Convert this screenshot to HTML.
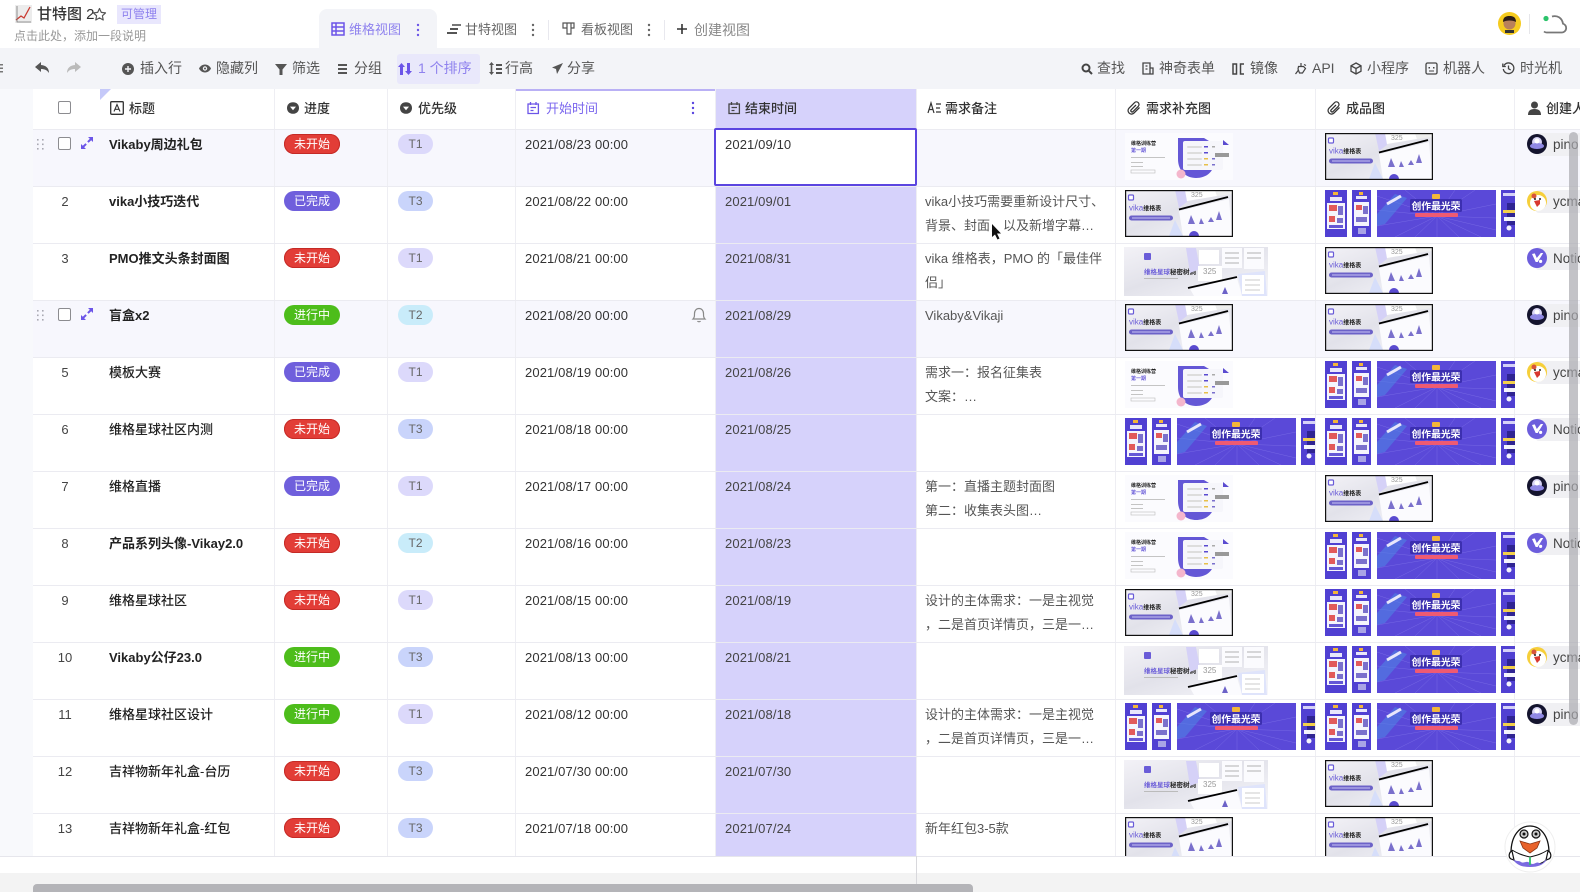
<!DOCTYPE html>
<html lang="zh-CN">
<head>
<meta charset="utf-8">
<title>甘特图 2</title>
<style>
html,body{margin:0;padding:0;width:1580px;height:892px;overflow:hidden;background:#fff}
body{position:relative;font:13px/20px "Liberation Sans","Noto Sans CJK SC",sans-serif;color:#444}
.t,.ic{position:absolute;white-space:nowrap}
.bar{font-size:14px;color:#555;line-height:20px;top:58px}
.ic{display:block;overflow:visible}
.tab{font-size:13px;color:#666;top:20px}
.hd{top:99px;color:#333;font-size:13px;font-weight:500}
.r{position:absolute;left:0;width:1580px;height:57px;overflow:hidden;z-index:3;border-top:1px solid #ebebf1;box-sizing:border-box}
.r .t{top:5px;line-height:20px}
.n{left:33px;width:64px;text-align:center;color:#444}
.ti{left:109px;font-weight:700;color:#222}
.r .p{left:284px;top:4px;width:56px;height:20px;border-radius:10px;color:#fff;font-size:12px;text-align:center}
.p0{background:#e23d37;box-shadow:inset 0 0 0 1px #c42a26}.p1{background:#6f5fdc}.p2{background:#4dbd1b}
.r .q{left:398px;top:4px;width:35px;height:20px;border-radius:10px;font-size:12px;text-align:center;color:#666}
.t1{background:#dcd9fb}.t2{background:#c9ecfa}.t3{background:#c9d4fb}
.d{left:525px;color:#333;letter-spacing:.12px}.e{left:725px;color:#444;letter-spacing:.12px}
.r .m{left:925px;top:3px;line-height:24px;color:#555}
.th{position:absolute;top:3px}
.chip{position:absolute;left:1535px;top:3px;width:60px;height:23px;background:#f0f0f3;border-radius:4px}
.r .u{left:1553px;top:5px;color:#444;font-size:13.5px}
.av{position:absolute;left:1527px;top:4px}
.cb{position:absolute;left:58px;top:7px;width:11px;height:11px;border:1.5px solid #8c8c90;border-radius:2px;box-sizing:content-box;background:#fff}
.v{position:absolute;top:89px;height:768px;width:1px;background:#eeeef3;z-index:2}
</style>
</head>
<body>
<svg width="0" height="0" style="position:absolute">
<defs>
<linearGradient id="ga" x1="0" y1="0" x2="1" y2="1"><stop offset="0" stop-color="#f3f2f7"/><stop offset=".45" stop-color="#e2e2ea"/><stop offset="1" stop-color="#f7f7fb"/></linearGradient>
<symbol id="A" viewBox="0 0 108 47">
<rect width="108" height="47" fill="url(#ga)"/>
<polygon points="50,0 60,0 62,12 54,18" fill="#d5d1f7"/>
<polygon points="60,0 90,0 92,6 62,11" fill="#fff"/>
<polygon points="90,0 108,0 108,4 92,6" fill="#eee"/>
<text x="66" y="7" font-size="7" fill="#999" font-family="Liberation Sans">325</text>
<polygon points="54,21 104,9 107,46 58,46" fill="#fbfbfe"/>
<polygon points="50,30 58,46 44,46" fill="#d6defa"/>
<line x1="54" y1="19.500" x2="103" y2="7" stroke="#000" stroke-width="1.800"/>
<path d="M63 34l3-9 4 9zM74 34l2-6 3 6zM83 32l3-5 3 5zM91 30l3-9 3 9z" fill="#7a70cc"/>
<circle cx="69" cy="46" r="5" fill="#5a4bd0"/>
<rect x="3.500" y="5" width="5" height="5" rx="1" fill="#fff" stroke="#6a5cd8" stroke-width="1.200"/>
<text x="4" y="20.500" font-size="8" fill="#6c5fd8" font-family="Liberation Sans">vika<tspan font-size="6" fill="#222" font-weight="700" font-family="Noto Sans CJK SC">维格表</tspan></text>
<rect x="4" y="25.500" width="44" height="5" rx="2.500" fill="#6c62c8"/>
<rect x="7" y="27.500" width="38" height="1" fill="#c9c4f5"/>
<rect x=".6" y=".6" width="106.8" height="45.8" fill="none" stroke="#111" stroke-width="1.2"/>
</symbol>
<symbol id="B" viewBox="0 0 108 47">
<rect width="108" height="47" fill="#fbfbfe"/>
<text x="6" y="12" font-size="5" font-weight="700" fill="#222">维格训练营</text>
<text x="6" y="19" font-size="5" font-weight="700" fill="#6a5cd8">第一期</text>
<rect x="6" y="24" width="34" height="1" fill="#c4c4c4"/><rect x="6" y="29" width="12" height="1" fill="#c4c4c4"/><rect x="6" y="33" width="12" height="1" fill="#c4c4c4"/><rect x="6" y="37" width="24" height="3" fill="none" stroke="#bbb" stroke-width=".6"/>
<path d="M53 5h26l10 6v18c0 10-8 16-18 16S53 38 53 26z" fill="#6457d6"/>
<rect x="58" y="8" width="40" height="29" rx="2" fill="#f6f6fb"/>
<rect x="62" y="13" width="15" height="2" rx="1" fill="#ddd"/><rect x="62" y="19" width="15" height="2" rx="1" fill="#ddd"/><rect x="62" y="25" width="15" height="2" rx="1" fill="#ddd"/><rect x="62" y="31" width="15" height="2" rx="1" fill="#ddd"/>
<rect x="79" y="13" width="4" height="1.500" fill="#5a4bd0"/><rect x="79" y="19" width="4" height="1.500" fill="#5a4bd0"/><rect x="79" y="25" width="4" height="1.500" fill="#e7c04a"/><rect x="79" y="31" width="4" height="1.500" fill="#e7c04a"/>
<rect x="87" y="13" width="3" height="1.500" fill="#aaa"/><rect x="87" y="25" width="3" height="1.500" fill="#7a70cc"/><rect x="87" y="31" width="3" height="1.500" fill="#7a70cc"/>
<rect x="90" y="20" width="14" height="4" fill="#999"/>
<path d="M98 7l6 5h-6z" fill="#5a4bd0"/>
<circle cx="56" cy="41" r="4.500" fill="#f4b6cc"/>
</symbol>
<symbol id="C" viewBox="0 0 144 49">
<rect width="144" height="49" fill="url(#ga)"/>
<rect x="20" y="6" width="7" height="7" rx="1" fill="#6a5cd8"/>
<text x="20" y="27" font-size="6.500" font-weight="700" fill="#6a5cd8">维格星球<tspan fill="#222">秘密树洞</tspan></text>
<rect x="20" y="31" width="34" height="1" fill="#bbb"/>
<polygon points="62,1 72,1 76,22 66,26" fill="#d5d1f7"/>
<rect x="75" y="3" width="20" height="14" fill="#fff"/>
<rect x="98" y="1" width="20" height="20" fill="#fbfbfe"/>
<rect x="120" y="1" width="20" height="21" fill="#fbfbfe"/>
<path d="M101 6h14M101 11h14M101 16h14M123 6h14M123 11h14" stroke="#999" stroke-width=".8"/>
<rect x="74" y="19" width="24" height="15" fill="#fff"/>
<text x="79" y="27" font-size="8" fill="#999" font-family="Liberation Sans">325</text>
<polygon points="66,42 113,31 118,49 70,49" fill="#fbfbfe"/>
<line x1="64" y1="41" x2="113" y2="30" stroke="#000" stroke-width="1.800"/>
<polygon points="114,27 141,24 143,49 118,49" fill="#dfe4fb"/>
<rect x="118" y="28" width="22" height="19" fill="#fff"/>
<path d="M121 33h15M121 38h15M121 43h15" stroke="#bbb" stroke-width=".8"/>
<path d="M98 47l3-7 3 7z" fill="#6c62c8"/>
</symbol>
<symbol id="D" viewBox="0 0 190 47">
<rect width="190" height="47" fill="#fff"/>
<rect x="0" width="22" height="47" fill="#5040d2"/>
<rect x="2" y="13" width="18" height="26" fill="#f4f4fc"/><rect x="4" y="15" width="8" height="6" fill="#e25a5a"/><rect x="13" y="16" width="5" height="9" fill="#7a70cc"/><rect x="4" y="26" width="6" height="6" fill="#e25a5a"/><rect x="12" y="28" width="6" height="5" fill="#7a70cc"/><rect x="4" y="35" width="14" height="3" fill="#6457d6"/><rect x="5" y="7" width="12" height="4" fill="#e8e6fb"/><rect x="8" y="2" width="5" height="3" fill="#f3b63a"/>
<rect x="27" width="19" height="47" fill="#5040d2"/>
<rect x="29" y="12" width="15" height="24" fill="#f4f4fc"/><rect x="31" y="15" width="6" height="5" fill="#e25a5a"/><rect x="38" y="16" width="5" height="8" fill="#7a70cc"/><rect x="31" y="27" width="11" height="5" fill="#7a70cc"/><rect x="33" y="38" width="8" height="6" fill="#a9a4e6"/><rect x="31" y="6" width="11" height="3" fill="#e8e6fb"/><rect x="34" y="2" width="4" height="3" fill="#f3b63a"/>
<rect x="52" width="119" height="47" fill="#5a49d8"/>
<g stroke="#7668e4" stroke-width=".5">
<path d="M112 26L52 6M112 26L52 20M112 26L52 36M112 26L70 47M112 26L90 47M112 26L112 47M112 26L134 47M112 26L156 47M112 26L171 40M112 26L171 28M112 26L171 14M112 26L150 0M112 26L130 0M112 26L80 0"/>
</g>
<polygon points="52,24 70,4 82,8 60,34 52,36" fill="#4f86e6" opacity=".55"/>
<path d="M62 14l14-8" stroke="#e8e6fb" stroke-width="3"/>
<rect x="85" y="9" width="52" height="13" rx="1.500" fill="#3c2fb0"/>
<text x="111" y="19.500" font-size="9.800" font-weight="700" fill="#fff" text-anchor="middle">创作最光荣</text>
<rect x="107" y="4" width="8" height="5" rx="1" fill="#f3b63a"/>
<rect x="90" y="23" width="43" height="4" rx="1" fill="#ef5a72"/>
<rect x="176" width="14" height="47" fill="#5040d2"/>
<rect x="178" y="3" width="12" height="3" fill="#d5d1f7"/><rect x="182" y="13" width="8" height="22" fill="#2f2492"/><rect x="178" y="20" width="12" height="3" fill="#f3d04a"/><rect x="179" y="27" width="11" height="4" fill="#f4f4fc"/><circle cx="184" cy="38" r="2.500" fill="#f4f4fc"/>
</symbol>
<symbol id="pino" viewBox="0 0 20 20"><circle cx="10" cy="10" r="10" fill="#14142e"/><circle cx="10" cy="8" r="5" fill="#d8d4f5"/><ellipse cx="10" cy="12" rx="7" ry="3" fill="#8f88e4"/><circle cx="10" cy="7" r="2.500" fill="#fff"/></symbol>
<symbol id="ycma" viewBox="0 0 20 20"><circle cx="10" cy="10" r="10" fill="#f6cf3a"/><ellipse cx="11" cy="12" rx="8" ry="8" fill="#fff"/><circle cx="7" cy="5" r="2.500" fill="#d8553a"/><path d="M7 10l6-1 0 4-3 3z" fill="#d8382f"/><circle cx="8" cy="8" r="1" fill="#222"/><circle cx="13" cy="8" r="1" fill="#222"/></symbol>
<symbol id="noti" viewBox="0 0 20 20"><circle cx="10" cy="10" r="10" fill="#6c5ddc"/><path d="M5 6l2.800-.6 2 4.600 4-5h2.400l-5.500 9h-2z" fill="#fff"/><circle cx="13.600" cy="13.400" r="1.600" fill="#fff"/></symbol>
<symbol id="exp" viewBox="0 0 12 12"><path d="M7 0h5v5l-1.800-1.800L7.600 5.800 6.200 4.400 8.800 1.800zM0 7l1.800 1.800 2.600-2.600 1.400 1.400-2.600 2.600L5 12H0z" fill="#6c55e8"/></symbol>
<symbol id="drag" viewBox="0 0 8 11"><g fill="#a9a9b2"><rect width="1.600" height="1.600"/><rect x="5" width="1.600" height="1.600"/><rect y="4.500" width="1.600" height="1.600"/><rect x="5" y="4.500" width="1.600" height="1.600"/><rect y="9" width="1.600" height="1.600"/><rect x="5" y="9" width="1.600" height="1.600"/></g></symbol>
<symbol id="sel" viewBox="0 0 14 14"><path d="M7 1.200C10.500 1.200 13 3.500 13 7s-2.500 5.800-6 5.800S1 10.500 1 7 3.500 1.200 7 1.200z" fill="#444"/><path d="M4 5.600h6L7 9.200z" fill="#fff"/></symbol>
<symbol id="cal" viewBox="0 0 14 14"><path d="M2 3h10.400v9.500H2zM4.500 1v3M10 1v3M4.500 6.500h5.500M4.500 9.500h3" fill="none" stroke="currentColor" stroke-width="1.300"/></symbol>
<symbol id="clip" viewBox="0 0 14 14"><path d="M12.500 6.500L7 12a3.400 3.400 0 0 1-5-4.800L7.500 1.700a2.600 2.600 0 0 1 3.800 3.600L6 10.600a1.200 1.200 0 0 1-1.800-1.800L9 4" fill="none" stroke="#333" stroke-width="1.250"/></symbol>
<symbol id="dots" viewBox="0 0 4 14"><circle cx="2" cy="2" r="1.200" fill="currentColor"/><circle cx="2" cy="7" r="1.200" fill="currentColor"/><circle cx="2" cy="12" r="1.200" fill="currentColor"/></symbol>
</defs>
</svg>

<!-- top header -->
<svg class="ic" style="left:15px;top:5px" width="17" height="18" viewBox="0 0 17 18"><rect width="17" height="18" fill="#ececec"/><path d="M1 15l5-4 3 2 6-11" fill="none" stroke="#c9392f" stroke-width="1.300"/><path d="M2 1v16h14" fill="none" stroke="#777" stroke-width=".8"/></svg>
<span class="t" style="left:37px;top:4px;font-size:15px;line-height:22px;color:#333;font-weight:500">甘特图 2</span>
<svg class="ic" style="left:92px;top:7px" width="15" height="15" viewBox="0 0 15 15"><path d="M7.500 1.500l1.800 3.900 4.200.5-3.100 2.900.8 4.200-3.700-2.100-3.700 2.100.8-4.200L1.500 5.900l4.200-.5z" fill="none" stroke="#555" stroke-width="1.200" stroke-linejoin="round"/></svg>
<span class="t" style="left:117px;top:5px;width:44px;height:19px;background:#e9e7fd;color:#8f82ee;font-size:12px;line-height:19px;text-align:center">可管理</span>
<span class="t" style="left:14px;top:26px;font-size:12px;color:#999">点击此处&#xFF0C;添加一段说明</span>

<div style="position:absolute;left:0;top:48px;width:1580px;height:41px;background:#f3f4f8"></div>
<div style="position:absolute;left:319px;top:9px;width:118px;height:40px;background:#f3f4f8;border-radius:8px 8px 0 0"></div>
<div style="position:absolute;left:0;top:89px;width:33px;height:768px;background:#f8f9fc;z-index:5"></div>

<svg class="ic" style="left:331px;top:22px" width="14" height="14" viewBox="0 0 14 14"><path d="M1 1h12v12H1zM1 5h12M1 9h12M5 1v12" fill="none" stroke="#6c55e8" stroke-width="1.500"/></svg>
<span class="t tab" style="left:349px;color:#8f82ee">维格视图</span>
<svg class="ic" style="left:416px;top:23px;color:#6c55e8" width="4" height="14"><use href="#dots"/></svg>
<svg class="ic" style="left:447px;top:23px" width="14" height="13" viewBox="0 0 14 13"><rect x="5" y="1" width="9" height="2" fill="#777"/><rect x="3" y="5" width="8" height="2" fill="#555"/><rect y="9" width="10" height="2" fill="#555"/></svg>
<span class="t tab" style="left:465px">甘特视图</span>
<svg class="ic" style="left:531px;top:23px;color:#666" width="4" height="14"><use href="#dots"/></svg>
<div style="position:absolute;left:548px;top:20px;width:1px;height:20px;background:#e8e8ee"></div>
<svg class="ic" style="left:562px;top:22px" width="13" height="14" viewBox="0 0 13 14"><path d="M1 1h11v5h-3v6H5V6H1zM5 1v5M9 1v5" fill="none" stroke="#555" stroke-width="1.200"/></svg>
<span class="t tab" style="left:581px">看板视图</span>
<svg class="ic" style="left:647px;top:23px;color:#666" width="4" height="14"><use href="#dots"/></svg>
<div style="position:absolute;left:664px;top:20px;width:1px;height:20px;background:#e8e8ee"></div>
<svg class="ic" style="left:677px;top:24px" width="10" height="10" viewBox="0 0 10 10"><path d="M5 0v10M0 5h10" stroke="#333" stroke-width="1.600"/></svg>
<span class="t tab" style="left:694px;color:#888;font-size:14px">创建视图</span>

<svg class="ic" style="left:1498px;top:12px" width="23" height="23" viewBox="0 0 23 23"><circle cx="11.500" cy="11.500" r="11.500" fill="#f5cb1f"/><circle cx="11.500" cy="11.500" r="6" fill="#b9805a"/><path d="M5 10c0-5 3-6 6.500-6s6.500 1 6.500 6c-3-2-10-2-13 0z" fill="#2a1c17"/><path d="M7 18h9v3H7z" fill="#333"/></svg>
<div style="position:absolute;left:1529px;top:14px;width:1px;height:20px;background:#e6e6ea"></div>
<svg class="ic" style="left:1542px;top:14px" width="26" height="20" viewBox="0 0 26 20"><path d="M5 18.500h15a4.500 4.500 0 0 0 1-8.800C20 4 15.500 1 10 2.500" fill="none" stroke="#777" stroke-width="1.800"/><path d="M5 18.500a4 4 0 0 1-3-1" fill="none" stroke="#777" stroke-width="1.800"/><circle cx="4" cy="4.500" r="2.600" fill="#2cc36b"/></svg>

<!-- toolbar left -->
<div style="position:absolute;left:0;top:64px;width:3px;height:9px;background:repeating-linear-gradient(#777 0 1.500px,transparent 1.500px 3.500px)"></div>
<svg class="ic" style="left:35px;top:62px" width="14" height="12" viewBox="0 0 14 12"><path d="M6 0L0 5l6 5V7c3.500 0 6 1 8 4 0-5-3-7.500-8-8z" fill="#555"/></svg>
<svg class="ic" style="left:67px;top:62px" width="14" height="12" viewBox="0 0 14 12"><path d="M8 0l6 5-6 5V7C4.500 7 2 8 0 11c0-5 3-7.500 8-8z" fill="#bbb"/></svg>
<svg class="ic" style="left:122px;top:63px" width="12" height="12" viewBox="0 0 12 12"><circle cx="6" cy="6" r="6" fill="#555"/><path d="M6 3v6M3 6h6" stroke="#f3f4f8" stroke-width="1.400"/></svg>
<span class="t bar" style="left:140px">插入行</span>
<svg class="ic" style="left:199px;top:64px" width="12" height="9" viewBox="0 0 12 9"><path d="M6 .5C9 .5 11 2.500 12 4.500 11 6.500 9 8.500 6 8.500S1 6.500 0 4.500C1 2.500 3 .5 6 .5z" fill="#555"/><circle cx="6" cy="4.500" r="2.200" fill="#f3f4f8"/><circle cx="6" cy="4.500" r="1" fill="#555"/></svg>
<span class="t bar" style="left:216px">隐藏列</span>
<svg class="ic" style="left:275px;top:64px" width="12" height="11" viewBox="0 0 12 11"><path d="M0 0h12L7.500 5.500V11h-3V5.500z" fill="#555"/></svg>
<span class="t bar" style="left:292px">筛选</span>
<svg class="ic" style="left:338px;top:64px" width="9" height="10" viewBox="0 0 9 10"><path d="M0 0h9v2H0zM0 4h9v2H0zM0 8h9v2H0z" fill="#555"/></svg>
<span class="t bar" style="left:354px">分组</span>
<div style="position:absolute;left:397px;top:54px;width:83px;height:30px;background:#e9e8fb;border-radius:3px"></div>
<svg class="ic" style="left:398px;top:62px" width="14" height="14" viewBox="0 0 14 14"><path d="M3.500 1L0 5h2v8h3V5h2zM10.500 13L14 9h-2V1H9v8H7z" fill="#6c55e8"/></svg>
<span class="t bar" style="left:418px;color:#8f82ee">1 个排序</span>
<svg class="ic" style="left:489px;top:62px" width="13" height="13" viewBox="0 0 13 13"><path d="M2.500 0L5 3H3.300v7H5l-2.500 3L0 10h1.700V3H0zM7 2h6v2H7zM7 6h6v2H7zM7 10h6v2H7z" fill="#555"/></svg>
<span class="t bar" style="left:505px">行高</span>
<svg class="ic" style="left:552px;top:63px" width="11" height="11" viewBox="0 0 11 11"><path d="M11 0L0 4.500l4 1.500 1 5z" fill="#555"/></svg>
<span class="t bar" style="left:567px">分享</span>

<!-- toolbar right -->
<svg class="ic" style="left:1081px;top:63px" width="12" height="12" viewBox="0 0 12 12"><circle cx="5" cy="5" r="3.500" fill="none" stroke="#444" stroke-width="2"/><path d="M8 8l3 3" stroke="#444" stroke-width="2"/></svg>
<span class="t bar" style="left:1097px">查找</span>
<svg class="ic" style="left:1142px;top:62px" width="12" height="13" viewBox="0 0 12 13"><path d="M1 1h7v11H1zM8 6h3v6H8M3.500 4h2M3.500 7h2" fill="none" stroke="#444" stroke-width="1.300"/></svg>
<span class="t bar" style="left:1159px">神奇表单</span>
<svg class="ic" style="left:1232px;top:63px" width="13" height="12" viewBox="0 0 13 12"><path d="M1 1h3.500v10H1zM12 1H8.500v10H12" fill="none" stroke="#444" stroke-width="1.500"/></svg>
<span class="t bar" style="left:1250px">镜像</span>
<svg class="ic" style="left:1295px;top:62px" width="12" height="13" viewBox="0 0 12 13"><path d="M3.500 4.500h5l2 2-3 4.500h-3L3 7zM6 4.500V1M3.500 8L.5 12M9 2.500l2 1" fill="none" stroke="#444" stroke-width="1.200"/></svg>
<span class="t bar" style="left:1312px">API</span>
<svg class="ic" style="left:1350px;top:62px" width="12" height="13" viewBox="0 0 12 13"><path d="M6 1l5 2.800v5.400L6 12 1 9.200V3.800zM1 3.800L6 6.500l5-2.700M6 6.500V12" fill="none" stroke="#444" stroke-width="1.300"/></svg>
<span class="t bar" style="left:1367px">小程序</span>
<svg class="ic" style="left:1425px;top:62px" width="13" height="13" viewBox="0 0 13 13"><rect x="1" y="1" width="11" height="11" rx="1.500" fill="none" stroke="#444" stroke-width="1.300"/><rect x="3.500" y="5" width="1.500" height="1.500" fill="#444"/><rect x="8" y="5" width="1.500" height="1.500" fill="#444"/><path d="M4 9h5" stroke="#444"/></svg>
<span class="t bar" style="left:1443px">机器人</span>
<svg class="ic" style="left:1502px;top:62px" width="13" height="13" viewBox="0 0 13 13"><path d="M2 3.500A5.300 5.300 0 1 1 1.300 7M.8 1.500v3h3M6.500 3.500v3.200l2.200 1.300" fill="none" stroke="#444" stroke-width="1.300"/></svg>
<span class="t bar" style="left:1520px">时光机</span>

<!-- table backgrounds -->
<div style="position:absolute;left:33px;top:129px;width:1547px;height:57px;background:#f7f7fd"></div>
<div style="position:absolute;left:33px;top:300px;width:1547px;height:57px;background:#f7f7fd"></div>
<div style="position:absolute;left:715px;top:89px;width:201px;height:768px;background:#d6d2fb;z-index:1"></div>
<div class="v" style="left:274px"></div><div class="v" style="left:387px"></div><div class="v" style="left:515px"></div><div class="v" style="left:715px"></div><div class="v" style="left:916px"></div><div class="v" style="left:1115px"></div><div class="v" style="left:1315px"></div><div class="v" style="left:1514px"></div>
<div style="position:absolute;left:516px;top:89px;width:199px;height:2px;background:#b9b0f5;z-index:3"></div>
<div style="position:absolute;left:100px;top:89px;width:0;height:0;border-top:11px solid #c5c9f9;border-right:11px solid transparent;z-index:3"></div>

<!-- table header -->
<div style="position:absolute;left:0;top:0;z-index:4">
<div class="cb" style="left:58px;top:101px"></div>
<svg class="ic" style="left:110px;top:101px" width="14" height="14" viewBox="0 0 14 14"><rect x=".7" y=".7" width="12.600" height="12.600" rx="1" fill="none" stroke="#333" stroke-width="1.300"/><path d="M4 10.500L7 3.500l3 7M5 8.300h4" fill="none" stroke="#333" stroke-width="1.100"/></svg>
<span class="t hd" style="left:129px">标题</span>
<svg class="ic" style="left:286px;top:101px" width="14" height="14"><use href="#sel"/></svg>
<span class="t hd" style="left:304px">进度</span>
<svg class="ic" style="left:399px;top:101px" width="14" height="14"><use href="#sel"/></svg>
<span class="t hd" style="left:418px">优先级</span>
<svg class="ic" style="left:526px;top:101px;color:#6c55e8" width="14" height="14"><use href="#cal"/></svg>
<span class="t hd" style="left:546px;color:#7b67ee;font-weight:400">开始时间</span>
<svg class="ic" style="left:691px;top:101px;color:#5a45e0" width="4" height="14"><use href="#dots"/></svg>
<svg class="ic" style="left:727px;top:101px;color:#444" width="14" height="14"><use href="#cal"/></svg>
<span class="t hd" style="left:745px">结束时间</span>
<svg class="ic" style="left:927px;top:102px" width="14" height="12" viewBox="0 0 14 12"><path d="M1 11L4 1l3 10M2 7.500h4M9 2h5M9 6h4M9 10h5" fill="none" stroke="#333" stroke-width="1.200"/></svg>
<span class="t hd" style="left:945px">需求备注</span>
<svg class="ic" style="left:1127px;top:101px" width="14" height="14"><use href="#clip"/></svg>
<span class="t hd" style="left:1146px">需求补充图</span>
<svg class="ic" style="left:1327px;top:101px" width="14" height="14"><use href="#clip"/></svg>
<span class="t hd" style="left:1346px">成品图</span>
<svg class="ic" style="left:1528px;top:101px" width="13" height="14" viewBox="0 0 13 14"><circle cx="6.500" cy="4" r="3.500" fill="#444"/><path d="M0 14c0-4 2-6 6.500-6S13 10 13 14z" fill="#444"/></svg>
<span class="t hd" style="left:1546px">创建人</span>
</div>

<!-- rows -->
<div class="r" style="top:129px">
<svg class="ic" style="left:37px;top:9px" width="8" height="11"><use href="#drag"/></svg><div class="cb"></div><svg class="ic" style="left:81px;top:7px" width="12" height="12"><use href="#exp"/></svg>
<span class="t ti">Vikaby周边礼包</span><span class="t p p0">未开始</span><span class="t q t1">T1</span><span class="t d">2021/08/23 00:00</span>
<svg class="th" style="left:1125px" width="108" height="47"><use href="#B"/></svg><svg class="th" style="left:1325px" width="108" height="47"><use href="#A"/></svg>
<div class="chip"></div><svg class="av" width="20" height="20"><use href="#pino"/></svg><span class="t u">pino</span>
</div>
<div class="r" style="top:186px">
<span class="t n">2</span><span class="t ti">vika小技巧迭代</span><span class="t p p1">已完成</span><span class="t q t3">T3</span><span class="t d">2021/08/22 00:00</span><span class="t e">2021/09/01</span>
<span class="t m">vika小技巧需要重新设计尺寸、<br>背景、封面&#xFF0C;以及新增字幕…</span>
<svg class="th" style="left:1125px" width="108" height="47"><use href="#A"/></svg><svg class="th" style="left:1325px" width="190" height="47"><use href="#D"/></svg>
<div class="chip"></div><svg class="av" width="20" height="20"><use href="#ycma"/></svg><span class="t u">ycma</span>
</div>
<div class="r" style="top:243px">
<span class="t n">3</span><span class="t ti">PMO推文头条封面图</span><span class="t p p0">未开始</span><span class="t q t1">T1</span><span class="t d">2021/08/21 00:00</span><span class="t e">2021/08/31</span>
<span class="t m">vika 维格表&#xFF0C;PMO 的「最佳伴<br>侣」</span>
<svg class="th" style="left:1124px" width="144" height="49"><use href="#C"/></svg><svg class="th" style="left:1325px" width="108" height="47"><use href="#A"/></svg>
<div class="chip"></div><svg class="av" width="20" height="20"><use href="#noti"/></svg><span class="t u">Notic</span>
</div>
<div class="r" style="top:300px">
<svg class="ic" style="left:37px;top:9px" width="8" height="11"><use href="#drag"/></svg><div class="cb"></div><svg class="ic" style="left:81px;top:7px" width="12" height="12"><use href="#exp"/></svg>
<span class="t ti">盲盒x2</span><span class="t p p2">进行中</span><span class="t q t2">T2</span><span class="t d">2021/08/20 00:00</span>
<svg class="ic" style="left:692px;top:6px" width="14" height="16" viewBox="0 0 14 16"><path d="M1 12c1.500-1.500 1.500-3 1.500-5.500C2.500 3.500 4.500 1.500 7 1.500s4.500 2 4.500 5c0 2.500 0 4 1.500 5.500zM5.500 14c.5 1 2.500 1 3 0" fill="none" stroke="#888" stroke-width="1.200"/></svg>
<span class="t e">2021/08/29</span><span class="t m">Vikaby&amp;Vikaji</span>
<svg class="th" style="left:1125px" width="108" height="47"><use href="#A"/></svg><svg class="th" style="left:1325px" width="108" height="47"><use href="#A"/></svg>
<div class="chip"></div><svg class="av" width="20" height="20"><use href="#pino"/></svg><span class="t u">pino</span>
</div>
<div class="r" style="top:357px">
<span class="t n">5</span><span class="t ti" style="font-weight:500">模板大赛</span><span class="t p p1">已完成</span><span class="t q t1">T1</span><span class="t d">2021/08/19 00:00</span><span class="t e">2021/08/26</span>
<span class="t m">需求一&#xFF1A;报名征集表<br>文案&#xFF1A;…</span>
<svg class="th" style="left:1125px" width="108" height="47"><use href="#B"/></svg><svg class="th" style="left:1325px" width="190" height="47"><use href="#D"/></svg>
<div class="chip"></div><svg class="av" width="20" height="20"><use href="#ycma"/></svg><span class="t u">ycma</span>
</div>
<div class="r" style="top:414px">
<span class="t n">6</span><span class="t ti" style="font-weight:500">维格星球社区内测</span><span class="t p p0">未开始</span><span class="t q t3">T3</span><span class="t d">2021/08/18 00:00</span><span class="t e">2021/08/25</span>
<svg class="th" style="left:1125px" width="190" height="47"><use href="#D"/></svg><svg class="th" style="left:1325px" width="190" height="47"><use href="#D"/></svg>
<div class="chip"></div><svg class="av" width="20" height="20"><use href="#noti"/></svg><span class="t u">Notic</span>
</div>
<div class="r" style="top:471px">
<span class="t n">7</span><span class="t ti" style="font-weight:500">维格直播</span><span class="t p p1">已完成</span><span class="t q t1">T1</span><span class="t d">2021/08/17 00:00</span><span class="t e">2021/08/24</span>
<span class="t m">第一&#xFF1A;直播主题封面图<br>第二&#xFF1A;收集表头图…</span>
<svg class="th" style="left:1125px" width="108" height="47"><use href="#B"/></svg><svg class="th" style="left:1325px" width="108" height="47"><use href="#A"/></svg>
<div class="chip"></div><svg class="av" width="20" height="20"><use href="#pino"/></svg><span class="t u">pino</span>
</div>
<div class="r" style="top:528px">
<span class="t n">8</span><span class="t ti">产品系列头像-Vikay2.0</span><span class="t p p0">未开始</span><span class="t q t2">T2</span><span class="t d">2021/08/16 00:00</span><span class="t e">2021/08/23</span>
<svg class="th" style="left:1125px" width="108" height="47"><use href="#B"/></svg><svg class="th" style="left:1325px" width="190" height="47"><use href="#D"/></svg>
<div class="chip"></div><svg class="av" width="20" height="20"><use href="#noti"/></svg><span class="t u">Notic</span>
</div>
<div class="r" style="top:585px">
<span class="t n">9</span><span class="t ti" style="font-weight:500">维格星球社区</span><span class="t p p0">未开始</span><span class="t q t1">T1</span><span class="t d">2021/08/15 00:00</span><span class="t e">2021/08/19</span>
<span class="t m">设计的主体需求&#xFF1A;一是主视觉<br>&#xFF0C;二是首页详情页&#xFF0C;三是一…</span>
<svg class="th" style="left:1125px" width="108" height="47"><use href="#A"/></svg><svg class="th" style="left:1325px" width="190" height="47"><use href="#D"/></svg>
</div>
<div class="r" style="top:642px">
<span class="t n">10</span><span class="t ti">Vikaby公仔23.0</span><span class="t p p2">进行中</span><span class="t q t3">T3</span><span class="t d">2021/08/13 00:00</span><span class="t e">2021/08/21</span>
<svg class="th" style="left:1124px" width="144" height="49"><use href="#C"/></svg><svg class="th" style="left:1325px" width="190" height="47"><use href="#D"/></svg>
<div class="chip"></div><svg class="av" width="20" height="20"><use href="#ycma"/></svg><span class="t u">ycma</span>
</div>
<div class="r" style="top:699px">
<span class="t n">11</span><span class="t ti" style="font-weight:500">维格星球社区设计</span><span class="t p p2">进行中</span><span class="t q t1">T1</span><span class="t d">2021/08/12 00:00</span><span class="t e">2021/08/18</span>
<span class="t m">设计的主体需求&#xFF1A;一是主视觉<br>&#xFF0C;二是首页详情页&#xFF0C;三是一…</span>
<svg class="th" style="left:1125px" width="190" height="47"><use href="#D"/></svg><svg class="th" style="left:1325px" width="190" height="47"><use href="#D"/></svg>
<div class="chip"></div><svg class="av" width="20" height="20"><use href="#pino"/></svg><span class="t u">pino</span>
</div>
<div class="r" style="top:756px">
<span class="t n">12</span><span class="t ti" style="font-weight:500">吉祥物新年礼盒-台历</span><span class="t p p0">未开始</span><span class="t q t3">T3</span><span class="t d">2021/07/30 00:00</span><span class="t e">2021/07/30</span>
<svg class="th" style="left:1124px" width="144" height="49"><use href="#C"/></svg><svg class="th" style="left:1325px" width="108" height="47"><use href="#A"/></svg>
</div>
<div class="r" style="top:813px;height:44px">
<span class="t n">13</span><span class="t ti" style="font-weight:500">吉祥物新年礼盒-红包</span><span class="t p p0">未开始</span><span class="t q t3">T3</span><span class="t d">2021/07/18 00:00</span><span class="t e">2021/07/24</span>
<span class="t m">新年红包3-5款</span>
<svg class="th" style="left:1125px" width="108" height="47"><use href="#A"/></svg><svg class="th" style="left:1325px" width="108" height="47"><use href="#A"/></svg>
</div>

<!-- active cell -->
<div style="position:absolute;left:714px;top:128px;width:203px;height:58px;box-sizing:border-box;background:#fff;border:2px solid #5b45e0;border-radius:2px;z-index:6"><span class="t" style="left:9px;top:5px;color:#333;letter-spacing:.12px">2021/09/10</span></div>

<!-- cursor -->
<svg class="ic" style="left:991px;top:224px;z-index:7" width="11" height="16" viewBox="0 0 11 16"><path d="M1 0l9 9.500H6l2.500 5-2 1L4 10.500 1 13z" fill="#111"/></svg>

<!-- bottom -->
<div style="position:absolute;left:0;top:856px;width:1580px;height:36px;background:#fff;border-top:1px solid #e6e6ec;box-sizing:border-box;z-index:6"></div>
<div style="position:absolute;left:0;top:873px;width:1580px;height:19px;background:#f3f3f3;z-index:6"></div>
<div style="position:absolute;left:916px;top:856px;width:1px;height:36px;background:#d8d8dc;z-index:7"></div>
<div style="position:absolute;left:33px;top:884px;width:940px;height:8px;background:#b4b4b8;border-radius:4px 4px 0 0;z-index:7"></div>
<div style="position:absolute;left:1569px;top:132px;width:9px;height:593px;background:rgba(170,170,175,.7);border-radius:5px;z-index:7"></div>

<!-- mascot -->
<svg class="ic" style="left:1503px;top:823px;z-index:8" width="54" height="50" viewBox="0 0 54 50">
<circle cx="27" cy="24" r="25" fill="#fff" stroke="#eee"/>
<path d="M8 30C8 12 17 3 27 3s19 9 19 27c0 8-8 12-19 12S8 38 8 30z" fill="#fff" stroke="#111" stroke-width="1.300"/>
<path d="M8 36c-3-2-2-7 1-8l2 9zM46 36c3-2 2-7-1-8l-2 9z" fill="#fff" stroke="#111" stroke-width="1.200"/>
<path d="M10 36c3 3 5 1 8 3s5-2 9 1 6-2 9 0 5-2 8-4c-3 6-9 8-17 8s-14-2-17-8z" fill="#7a6ae0"/>
<circle cx="21" cy="11" r="4" fill="#ccc" stroke="#111" stroke-width="1.200"/><circle cx="33" cy="11" r="4" fill="#ccc" stroke="#111" stroke-width="1.200"/>
<circle cx="21" cy="11" r="1.500" fill="#111"/><circle cx="33" cy="11" r="1.500" fill="#111"/>
<path d="M17 18l10 3 10-3-3 7-7 5-7-5z" fill="#e8622a" stroke="#8a3413" stroke-width=".8"/>
<path d="M9 27c5 3 9 5 18 7 9-2 13-4 18-7" fill="none" stroke="#111" stroke-width="1"/>
<path d="M27 34v8" stroke="#2cc36b" stroke-width="1.800"/>
</svg>
</body>
</html>
